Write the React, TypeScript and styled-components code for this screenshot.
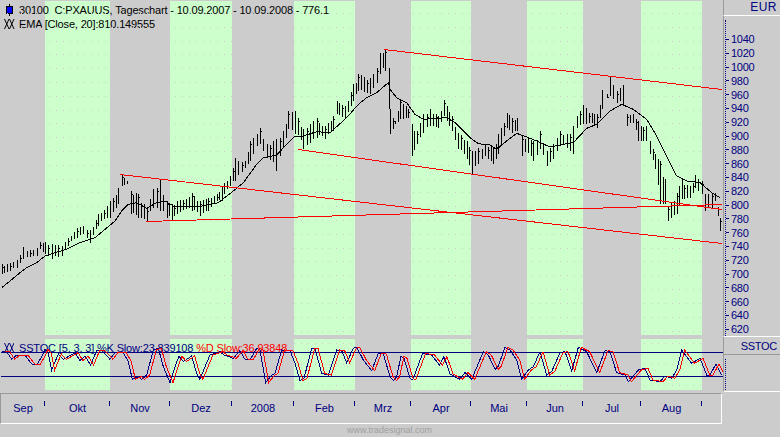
import React from 'react';
import styled, { createGlobalStyle } from 'styled-components';

const GREY = '#cccccc';
const GREEN = '#ccffcc';
const NAVY = '#000080';

type Pt = number[];

// month columns of the time axis, also the shaded bands behind the panes
const months = [
  { label: 'Sep', width: 45 },
  { label: 'Okt', width: 65 },
  { label: 'Nov', width: 60 },
  { label: 'Dez', width: 62 },
  { label: '2008', width: 62 },
  { label: 'Feb', width: 61 },
  { label: 'Mrz', width: 56 },
  { label: 'Apr', width: 60 },
  { label: 'Mai', width: 56 },
  { label: 'Jun', width: 56 },
  { label: 'Jul', width: 58 },
  { label: 'Aug', width: 61 },
  { label: '', width: 21 },
];

const prices = Array.from({ length: 22 }, (_, i) => 1040 - i * 20);

// all series were read at 3x, so they get scaled down here
const scale = (pts: Pt[], dx: number, dy: number) =>
  pts.map(([x, ...ys]) => [dx + x / 3, ...ys.map((y) => dy + y / 3)]);

const stochK = [
  ...scale(
    [
      [5, 395], [20, 395], [35, 418], [50, 405], [75, 405], [95, 432], [110, 435], [125, 410], [135, 388], [145, 400],
      [155, 450], [175, 402], [190, 418], [225, 398], [240, 422], [255, 408], [272, 435], [290, 392], [305, 392],
      [330, 418], [345, 398], [370, 398], [385, 425], [397, 478], [415, 470], [425, 478], [440, 465], [460, 390],
      [475, 385], [490, 440], [510, 488], [525, 440], [537, 408], [550, 425], [575, 408], [590, 460], [600, 478],
      [615, 440], [630, 405], [660, 395], [672, 405], [700, 415], [720, 392], [735, 418], [750, 420], [770, 385],
      [780, 390], [797, 488], [815, 465], [825, 460], [845, 390], [870, 392], [885, 430], [900, 482], [912, 475],
      [935, 385], [945, 385], [965, 460], [985, 465], [1010, 390], [1025, 392], [1040, 428], [1060, 385], [1070, 382],
      [1090, 420], [1115, 452], [1135, 400], [1150, 402], [1170, 470],
    ],
    0,
    220,
  ),
  ...scale(
    [
      [10, 482], [20, 470], [33, 408], [42, 415], [60, 475], [68, 480], [98, 400], [125, 405], [148, 435], [162, 410],
      [180, 462], [208, 478], [225, 458], [245, 478], [280, 395], [295, 405], [315, 448], [325, 438], [345, 382],
      [360, 390], [380, 420], [395, 478], [415, 450], [430, 440], [450, 395], [470, 465], [485, 455], [510, 398],
      [525, 395], [545, 452], [565, 382], [590, 395], [620, 458], [645, 392], [660, 395], [680, 458], [705, 465],
      [715, 485], [745, 450], [765, 445], [780, 480], [810, 485], [825, 468], [845, 475], [860, 450], [875, 390],
      [905, 430], [930, 415], [950, 465], [960, 465], [978, 432], [995, 465],
    ],
    390,
    220,
  ),
];

const ema = [
  ...scale(
    [[5, 200], [30, 180], [60, 155], [80, 140], [110, 125], [135, 105], [165, 95], [200, 85], [240, 65], [285, 50], [345, 0]],
    0,
    220,
  ),
  ...scale(
    [
      [365, 630], [385, 610], [410, 605], [440, 622], [470, 605], [495, 600], [520, 615], [560, 615], [605, 615],
      [655, 605], [700, 570], [730, 545], [770, 490], [790, 470], [830, 462], [860, 430], [885, 405], [910, 405],
      [950, 392], [990, 395], [1040, 350], [1075, 310], [1100, 290], [1130, 275], [1165, 245],
    ],
    0,
    0,
  ),
  ...scale(
    [
      [0, 265], [20, 290], [50, 305], [75, 340], [100, 355], [170, 350], [195, 365], [240, 410], [265, 428], [300, 432],
      [320, 445], [350, 420], [380, 397], [410, 408], [440, 420], [480, 438], [520, 430], [550, 425], [590, 382],
      [620, 370], [660, 330], [695, 310], [730, 325], [770, 355], [800, 405], [830, 465], [860, 525], [890, 540],
      [930, 545], [965, 575], [990, 590],
    ],
    390,
    0,
  ),
];

// x, high, low
const envelope = [
  ...scale(
    [
      [5, 130, 160], [30, 125, 150], [50, 118, 140], [70, 78, 115], [90, 88, 108], [110, 82, 105], [120, 62, 85],
      [135, 62, 100], [155, 68, 115], [185, 75, 105], [205, 50, 75], [230, 20, 50], [250, 15, 40], [270, 28, 65],
    ],
    0,
    220,
  ),
  ...scale(
    [
      [295, 640, 675], [330, 600, 650], [355, 560, 610], [365, 520, 555], [380, 540, 550], [392, 570, 640],
      [415, 580, 650], [440, 620, 660], [460, 565, 620], [480, 535, 630], [500, 600, 650], [515, 610, 660],
      [530, 600, 640], [575, 575, 630], [600, 600, 645], [625, 590, 630], [650, 580, 600], [665, 555, 600],
      [690, 525, 555], [705, 470, 540], [735, 480, 500], [750, 420, 480], [780, 380, 430], [800, 430, 470],
      [828, 415, 510], [840, 410, 465], [865, 330, 385], [885, 330, 400], [910, 385, 445], [950, 350, 410],
      [975, 375, 415], [1000, 345, 390], [1010, 300, 340], [1035, 315, 355], [1060, 250, 300], [1075, 220, 270],
      [1110, 230, 280], [1130, 200, 245], [1140, 155, 220], [1155, 145, 210], [1167, 200, 325],
    ],
    0,
    0,
  ),
  ...scale(
    [
      [0, 325, 400], [15, 360, 370], [30, 295, 355], [55, 325, 350], [65, 370, 465], [80, 390, 430], [100, 340, 395],
      [120, 325, 375], [145, 345, 380], [162, 298, 345], [185, 345, 390], [205, 395, 445], [230, 420, 475],
      [245, 450, 520], [265, 440, 490], [285, 430, 465], [310, 440, 490], [325, 400, 460], [350, 335, 380],
      [365, 350, 395], [382, 350, 390], [395, 405, 465], [415, 410, 455], [430, 420, 480], [450, 390, 445],
      [470, 450, 495], [490, 430, 475], [510, 390, 435], [530, 400, 440], [548, 375, 460], [560, 345, 380],
      [580, 312, 370], [605, 335, 365], [620, 340, 380], [637, 268, 325], [650, 280, 290], [660, 228, 285],
      [680, 270, 305], [700, 252, 315], [712, 340, 375], [730, 340, 365], [745, 360, 420], [768, 375, 420],
      [780, 420, 460], [795, 460, 505], [810, 480, 610], [825, 535, 610], [835, 615, 660], [860, 575, 640],
      [875, 535, 595], [900, 555, 590], [915, 522, 560], [935, 540, 580], [945, 580, 630], [965, 575, 620],
      [975, 575, 600], [990, 650, 690],
    ],
    390,
    0,
  ),
];

const toLine = (pts: Pt[], dx = 0) => pts.map(([x, y]) => `${x + dx},${y}`).join(' ');

// keep the bars that were read off, fill the space between them
const bars = envelope.flatMap(([x, hi, lo], i) => {
  const out = [{ x: Math.round(x), hi: Math.round(hi), lo: Math.round(lo) }];
  const next = envelope[i + 1];
  if (!next) return out;
  const steps = Math.round((next[0] - x) / 3);
  for (let s = 1; s < steps; s++) {
    const t = s / steps;
    const bx = x + (next[0] - x) * t;
    const top = hi + (next[1] - hi) * t;
    const bottom = lo + (next[2] - lo) * t;
    const range = bottom - top;
    out.push({
      x: Math.round(bx),
      hi: Math.round(top + range * 0.1 * (1 + Math.sin(bx * 1.7))),
      lo: Math.round(bottom - range * 0.1 * (1 + Math.cos(bx * 2.3))),
    });
  }
  return out;
});

const GlobalStyle = createGlobalStyle`
  html, body { margin: 0; padding: 0; background: ${GREY}; }
`;

const Page = styled.div`
  width: 780px;
  height: 437px;
  overflow: hidden;
  background: ${GREY};
  display: grid;
  grid-template-columns: 723px 57px;
  font-family: 'Liberation Sans', Arial, sans-serif;
`;

const Charts = styled.div`
  display: flex;
  flex-direction: column;
`;

const Pane = styled.div<{ $height: number; $top: number }>`
  position: relative;
  height: ${(p) => p.$height}px;
  margin-top: ${(p) => p.$top}px;
  display: flex;
  flex: none;
`;

const Band = styled.div<{ $width: number; $on: boolean }>`
  width: ${(p) => p.$width}px;
  flex: none;
  background: ${(p) => (p.$on ? GREEN : GREY)};
`;

const Plot = styled.svg`
  position: absolute;
  inset: 0;
  display: block;
`;

const Legend = styled.div<{ $top: number }>`
  position: absolute;
  left: 4px;
  top: ${(p) => p.$top}px;
  font-size: 11px;
  letter-spacing: -0.16px;
  line-height: 14px;
  white-space: pre;
`;

const LegendRow = styled.div<{ $color?: string }>`
  display: flex;
  align-items: center;
  gap: 4px;
  color: ${(p) => p.$color || '#000'};
`;

const Red = styled.span`
  color: #ff0000;
`;

const TimeAxis = styled.div`
  display: flex;
  height: 31px;
  flex: none;
  margin-top: 3px;
  box-sizing: border-box;
  border-top: 1px solid #999;
  border-left: 1px solid #999;
  border-right: 1px solid #fff;
  border-bottom: 1px solid #fff;
  margin-right: 1px;
`;

const Month = styled.div<{ $width: number; $tick: boolean }>`
  width: ${(p) => p.$width}px;
  flex: none;
  color: ${NAVY};
  font-size: 11px;
  text-align: center;
  &::after {
    content: '';
    display: ${(p) => (p.$tick ? 'block' : 'none')};
    width: 1px;
    height: 5px;
    background: ${NAVY};
    margin-left: ${(p) => p.$width - 1}px;
    margin-top: -14px;
  }
`;

const MonthLabel = styled.div`
  height: 14px;
  padding-top: 7px;
  line-height: 14px;
  margin-bottom: -7px;
`;

const Footer = styled.div`
  flex: none;
  height: 12px;
  line-height: 13px;
  text-align: center;
  font-size: 9px;
  color: #a0a0a0;
  padding-left: 56px;
`;

const Side = styled.div`
  display: flex;
  flex-direction: column;
`;

const AxisTitle = styled.div<{ $height: number; $spacing: number }>`
  height: ${(p) => p.$height}px;
  flex: none;
  box-sizing: border-box;
  border-bottom: 1px solid #fff;
  border-left: 1px solid #999;
  color: ${NAVY};
  font-size: 12px;
  text-align: right;
  padding-right: 3px;
  letter-spacing: ${(p) => p.$spacing}px;
  line-height: ${(p) => p.$height - 1}px;
`;

const SstocTitle = styled(AxisTitle)`
  border-top: 1px solid #fff;
  border-bottom: 1px solid #999;
  font-size: 11px;
`;

const PriceScale = styled.div`
  height: 320px;
  flex: none;
  box-sizing: border-box;
  border-left: 1px solid #999;
  padding: 4px 0 0 1px;
`;

const ScaleLine = styled.div`
  height: 316px;
  box-sizing: border-box;
  border-left: 1px dotted ${NAVY};
  padding-top: 12.6px;
`;

const PriceRow = styled.div`
  display: flex;
  align-items: center;
  height: 13.81px;
  gap: 2px;
  color: ${NAVY};
  font-size: 11px;
  letter-spacing: -0.3px;
  &::before {
    content: '';
    width: 3px;
    height: 1px;
    background: ${NAVY};
  }
`;

const StochScale = styled.div`
  height: 37px;
  flex: none;
  box-sizing: border-box;
  border-left: 1px solid #999;
  border-bottom: 1px solid #fff;
  padding: 4px 0 1px 1px;
`;

const StochLine = styled.div`
  height: 100%;
  border-left: 1px dotted ${NAVY};
`;

function Bands() {
  return (
    <>
      {months.map((m, i) => (
        <Band key={i} $width={m.width} $on={i % 2 === 1 && i < 12} />
      ))}
    </>
  );
}

function GridDots({ rows }: { rows: number[] }) {
  return (
    <>
      {rows.map((y) => (
        <line key={y} x1="0" x2="723" y1={y} y2={y} stroke={GREY} strokeDasharray="1 6" />
      ))}
    </>
  );
}

function PriceChart() {
  const rows = Array.from({ length: 24 }, (_, i) => Math.round(11.9 + i * 13.81) + 0.5);
  return (
    <Plot width="723" height="335" viewBox="0 0 723 335" shapeRendering="crispEdges">
      <GridDots rows={rows} />
      {bars.map((b, i) => (
        <g key={i} stroke="#000">
          <line x1={b.x + 0.5} x2={b.x + 0.5} y1={b.hi} y2={b.lo} />
          {i % 3 === 0 && <line x1={b.x + 1} x2={b.x + 2} y1={b.hi + 3.5} y2={b.hi + 3.5} />}
        </g>
      ))}
      <polyline points={toLine(ema)} fill="none" stroke="#000" />
      <g stroke="#ff0000" fill="none">
        <line x1="120" y1="173.5" x2="722" y2="242.5" />
        <line x1="384" y1="48.5" x2="722" y2="88.5" />
        <line x1="298" y1="148.5" x2="722" y2="208.5" />
        <line x1="146" y1="220.5" x2="722" y2="203.5" />
      </g>
    </Plot>
  );
}

function StochChart() {
  return (
    <Plot width="723" height="51" viewBox="0 339 723 51" shapeRendering="crispEdges">
      <GridDots rows={[343.5, 364.5, 385.5]} />
      <line x1="1" x2="723" y1="352.5" y2="352.5" stroke={NAVY} />
      <line x1="1" x2="723" y1="376.5" y2="376.5" stroke={NAVY} />
      <polyline points={toLine(stochK)} fill="none" stroke={NAVY} />
      <polyline points={toLine(stochK, 3)} fill="none" stroke="#ff0000" />
    </Plot>
  );
}

const CandleIcon = () => (
  <svg width="11" height="12" viewBox="0 0 11 12" shapeRendering="crispEdges">
    <rect x="5" y="0" width="1" height="12" fill="#000" />
    <rect x="2.5" y="2.5" width="6" height="7" fill="#0000ff" stroke="#000" />
  </svg>
);

const CrossIcon = ({ color }: { color: string }) => (
  <svg width="11" height="12" viewBox="0 0 11 12" fill="none" stroke={color}>
    <path d="M0.5 1 L5 11 M5 1 L0.5 11 M5.5 1 L10 11 M10 1 L5.5 11" />
  </svg>
);

export default function App() {
  return (
    <Page>
      <GlobalStyle />
      <Charts>
        <Pane $height={334} $top={1}>
          <Bands />
          <Legend $top={2}>
            <LegendRow>
              <CandleIcon />
              <span>30100  C:PXAUUS, Tageschart - 10.09.2007 - 10.09.2008 - 776.1</span>
            </LegendRow>
            <LegendRow>
              <CrossIcon color="#000" />
              <span>EMA [Close, 20]:810.149555</span>
            </LegendRow>
          </Legend>
          <PriceChart />
        </Pane>
        <Pane $height={51} $top={4}>
          <Bands />
          <Legend $top={2}>
            <LegendRow $color={NAVY}>
              <CrossIcon color={NAVY} />
              <span>
                SSTOC [5, 3, 3] %K Slow:23.839108 <Red>%D Slow:36.93848</Red>
              </span>
            </LegendRow>
          </Legend>
          <StochChart />
        </Pane>
        <TimeAxis>
          {months.map((m, i) => (
            <Month key={i} $width={i === 0 ? m.width - 1 : m.width} $tick={i < 12}>
              <MonthLabel>{m.label}</MonthLabel>
            </Month>
          ))}
        </TimeAxis>
        <Footer>www.tradesignal.com</Footer>
      </Charts>
      <Side>
        <AxisTitle $height={16} $spacing={0.5}>EUR</AxisTitle>
        <PriceScale>
          <ScaleLine>
            {prices.map((p) => (
              <PriceRow key={p}>{p}</PriceRow>
            ))}
          </ScaleLine>
        </PriceScale>
        <SstocTitle $height={19} $spacing={-0.3}>SSTOC</SstocTitle>
        <StochScale>
          <StochLine />
        </StochScale>
      </Side>
    </Page>
  );
}
